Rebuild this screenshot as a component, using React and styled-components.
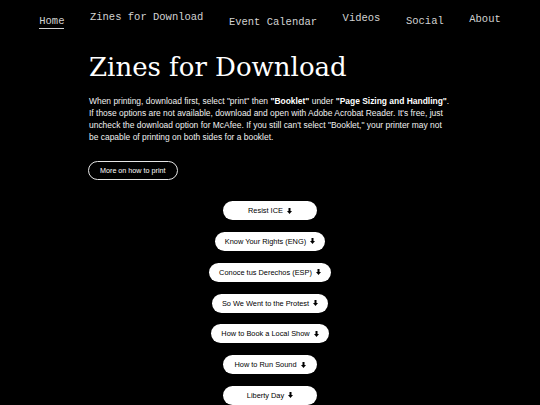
import React from "react";
import styled, { createGlobalStyle } from "styled-components";

const GlobalStyle = createGlobalStyle`
  html, body {
    margin: 0;
    padding: 0;
    background: #000;
  }
  body {
    font-family: "Liberation Sans", Arial, sans-serif;
    color: #eee;
  }
`;

const Page = styled.div`
  min-height: 100vh;
  background: #000;
  overflow: hidden;
`;

const Nav = styled.nav`
  height: 40px;
  box-sizing: border-box;
  padding-top: 11px;
  display: flex;
  justify-content: center;
  align-items: flex-start;
  gap: 25.5px;
`;

const NavLink = styled.a`
  margin-top: ${(p) => p.$drop}px;
  font-family: "Liberation Mono", "Courier New", monospace;
  font-size: 10.5px;
  line-height: 12px;
  color: #d2d2d2;
  text-decoration: none;
  white-space: nowrap;
  padding-bottom: ${(p) => (p.$active ? "1px" : "0")};
  border-bottom: ${(p) => (p.$active ? "1px solid #d2d2d2" : "none")};
`;

const Main = styled.main`
  width: 362px;
  margin: 0 auto;
`;

const Title = styled.h1`
  margin: 12px 0 0;
  font-family: "DejaVu Serif", Georgia, serif;
  font-weight: normal;
  font-size: 26px;
  line-height: 30px;
  color: #fff;
`;

const Intro = styled.p`
  margin: 12.6px 0 0;
  font-size: 8.45px;
  line-height: 12px;
  color: #f0f0f0;

  & b {
    font-weight: bold;
    color: #fff;
  }
`;

const OutlineButton = styled.div`
  display: inline-flex;
  align-items: center;
  box-sizing: border-box;
  height: 19px;
  margin-top: 18.6px;
  margin-left: -1px;
  padding: 0 11px;
  border: 1px solid #e6e6e6;
  border-radius: 10px;
  font-size: 7.2px;
  color: #fff;
  cursor: pointer;
`;

const ZineList = styled.div`
  margin-top: 21px;
  display: flex;
  flex-direction: column;
  align-items: center;
  gap: 11.8px;
`;

const ZineButton = styled.div`
  display: flex;
  align-items: center;
  justify-content: center;
  box-sizing: border-box;
  height: 19px;
  min-width: 94px;
  padding: 0 10px;
  border-radius: 10px;
  background: #fff;
  color: #000;
  font-size: 7.4px;
  white-space: nowrap;
  cursor: pointer;
`;

const Arrow = styled.svg`
  margin-left: 4px;
  flex: none;
`;

const DownArrow = () => (
  <Arrow width="5" height="6" viewBox="0 0 5 6">
    <rect x="1.5" y="0" width="2" height="3.4" fill="#000" />
    <polygon points="0,3 5,3 2.5,6" fill="#000" />
  </Arrow>
);

const navItems = [
  { label: "Home", drop: 3.7, active: true },
  { label: "Zines for Download", drop: 0 },
  { label: "Event Calendar", drop: 4.7 },
  { label: "Videos", drop: 0.5 },
  { label: "Social", drop: 4 },
  { label: "About", drop: 2 },
];

const zines = [
  "Resist ICE",
  "Know Your Rights (ENG)",
  "Conoce tus Derechos (ESP)",
  "So We Went to the Protest",
  "How to Book a Local Show",
  "How to Run Sound",
  "Liberty Day",
];

export default function App() {
  return (
    <Page>
      <GlobalStyle />
      <Nav>
        {navItems.map((item) => (
          <NavLink key={item.label} href="#" $drop={item.drop} $active={item.active}>
            {item.label}
          </NavLink>
        ))}
      </Nav>
      <Main>
        <Title>Zines for Download</Title>
        <Intro>
          When printing, download first, select "print" then <b>"Booklet"</b> under{" "}
          <b>"Page Sizing and Handling"</b>. If those options are not available, download and
          open with Adobe Acrobat Reader. It's free, just uncheck the download option for McAfee.
          If you still can't select "Booklet," your printer may not be capable of printing on both
          sides for a booklet.
        </Intro>
        <OutlineButton>More on how to print</OutlineButton>
      </Main>
      <ZineList>
        {zines.map((z) => (
          <ZineButton key={z}>
            {z}
            <DownArrow />
          </ZineButton>
        ))}
      </ZineList>
    </Page>
  );
}
